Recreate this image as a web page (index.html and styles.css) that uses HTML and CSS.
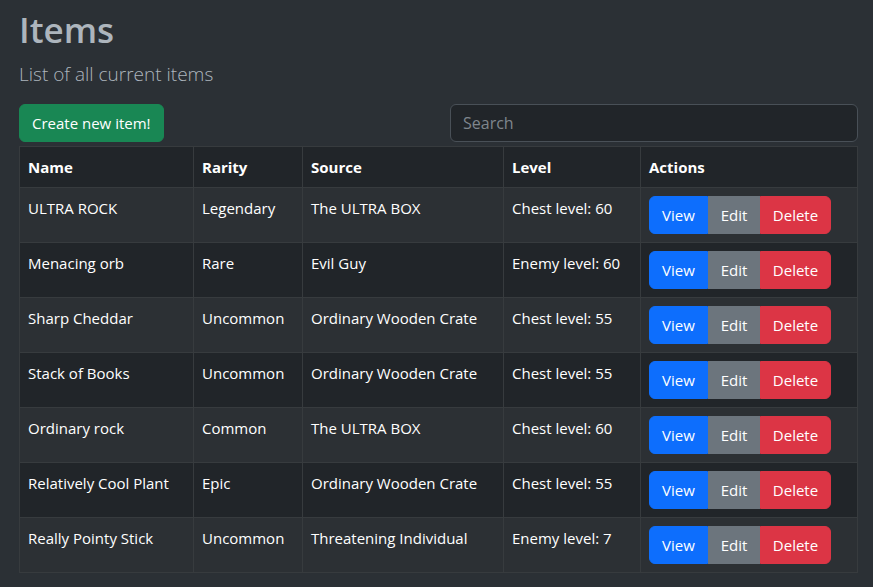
FILE: index.html
```html
<!DOCTYPE html>
<html lang="en">
<head>
<meta charset="utf-8">
<title>Items</title>
<link rel="stylesheet" href="styles.css">
</head>
<body>
<main class="page">
  <h1 class="title">Items</h1>
  <p class="lead">List of all current items</p>
  <div class="toolbar">
    <button class="btn btn-success">Create new item!</button>
    <input class="search" type="text" placeholder="Search">
  </div>
  <table class="table">
    <colgroup>
      <col class="c-name"><col class="c-rarity"><col class="c-source"><col class="c-level"><col class="c-actions">
    </colgroup>
    <thead>
      <tr><th>Name</th><th>Rarity</th><th>Source</th><th>Level</th><th>Actions</th></tr>
    </thead>
    <tbody>
      <tr><td>ULTRA ROCK</td><td>Legendary</td><td>The ULTRA BOX</td><td>Chest level: 60</td><td><div class="group"><button class="btn btn-primary">View</button><button class="btn btn-secondary">Edit</button><button class="btn btn-danger">Delete</button></div></td></tr>
      <tr><td>Menacing orb</td><td>Rare</td><td>Evil Guy</td><td>Enemy level: 60</td><td><div class="group"><button class="btn btn-primary">View</button><button class="btn btn-secondary">Edit</button><button class="btn btn-danger">Delete</button></div></td></tr>
      <tr><td>Sharp Cheddar</td><td>Uncommon</td><td>Ordinary Wooden Crate</td><td>Chest level: 55</td><td><div class="group"><button class="btn btn-primary">View</button><button class="btn btn-secondary">Edit</button><button class="btn btn-danger">Delete</button></div></td></tr>
      <tr><td>Stack of Books</td><td>Uncommon</td><td>Ordinary Wooden Crate</td><td>Chest level: 55</td><td><div class="group"><button class="btn btn-primary">View</button><button class="btn btn-secondary">Edit</button><button class="btn btn-danger">Delete</button></div></td></tr>
      <tr><td>Ordinary rock</td><td>Common</td><td>The ULTRA BOX</td><td>Chest level: 60</td><td><div class="group"><button class="btn btn-primary">View</button><button class="btn btn-secondary">Edit</button><button class="btn btn-danger">Delete</button></div></td></tr>
      <tr><td>Relatively Cool Plant</td><td>Epic</td><td>Ordinary Wooden Crate</td><td>Chest level: 55</td><td><div class="group"><button class="btn btn-primary">View</button><button class="btn btn-secondary">Edit</button><button class="btn btn-danger">Delete</button></div></td></tr>
      <tr><td>Really Pointy Stick</td><td>Uncommon</td><td>Threatening Individual</td><td>Enemy level: 7</td><td><div class="group"><button class="btn btn-primary">View</button><button class="btn btn-secondary">Edit</button><button class="btn btn-danger">Delete</button></div></td></tr>
    </tbody>
  </table>
</main>
</body>
</html>
```
FILE: styles.css
```css
* { box-sizing: border-box; }
html, body { margin: 0; padding: 0; }
body {
  background: #2b3035;
  color: #dee2e6;
  font-family: "Open Sans", "Noto Sans", sans-serif;
  font-size: 16px;
  line-height: 1.5;
}
.page {
  padding: 9px 15px 0 19px;
}
.title {
  margin: 0;
  font-size: 35px;
  font-weight: 600;
  line-height: 1.2;
  color: #adb5bd;
}
.lead {
  margin: 9px 0 15px;
  font-size: 19px;
  font-weight: 300;
  color: #adb5bd;
}
.toolbar {
  display: flex;
  justify-content: space-between;
  align-items: center;
  margin-bottom: 4px;
}
.btn {
  font-family: inherit;
  font-size: 15px;
  line-height: 24px;
  padding: 6px 12px;
  border: 1px solid transparent;
  border-radius: 6px;
  color: #fff;
  cursor: pointer;
}
.btn-success { background: #198754; border-color: #198754; }
.btn-primary { background: #0d6efd; border-color: #0d6efd; }
.btn-secondary { background: #6c757d; border-color: #6c757d; }
.btn-danger { background: #dc3545; border-color: #dc3545; }
.search {
  width: 408px;
  height: 38px;
  padding: 6px 12px;
  font-family: inherit;
  font-size: 16px;
  color: #dee2e6;
  background: #212529;
  border: 1px solid #495057;
  border-radius: 6px;
  outline: none;
}
.search::placeholder { color: #7f868d; }
.table {
  width: 100%;
  border-collapse: collapse;
  table-layout: fixed;
  background: #212529;
  color: #fff;
  border: 1px solid #373b3e;
}
.c-name { width: 174px; }
.c-rarity { width: 109px; }
.c-source { width: 201px; }
.c-level { width: 137px; }
.table th, .table td {
  border: 1px solid #373b3e;
  padding: 8px;
  text-align: left;
  vertical-align: top;
  font-size: 15px;
}
.table th { font-weight: 700; padding: 9px 8px 9px; }
.table td { padding-top: 9px; padding-bottom: 7px; }
.table td:last-child { padding-top: 8px; padding-bottom: 8px; }
.table tbody tr:nth-child(odd) td { background: #2c3034; }
.group { display: flex; }
.group .btn { border-radius: 0; padding: 6px 0; }
.group .btn:first-child { border-radius: 6px 0 0 6px; }
.group .btn:last-child { border-radius: 0 6px 6px 0; }
.group .btn-primary { width: 59px; }
.group .btn-secondary { width: 52px; }
.group .btn-danger { width: 71px; }
```
